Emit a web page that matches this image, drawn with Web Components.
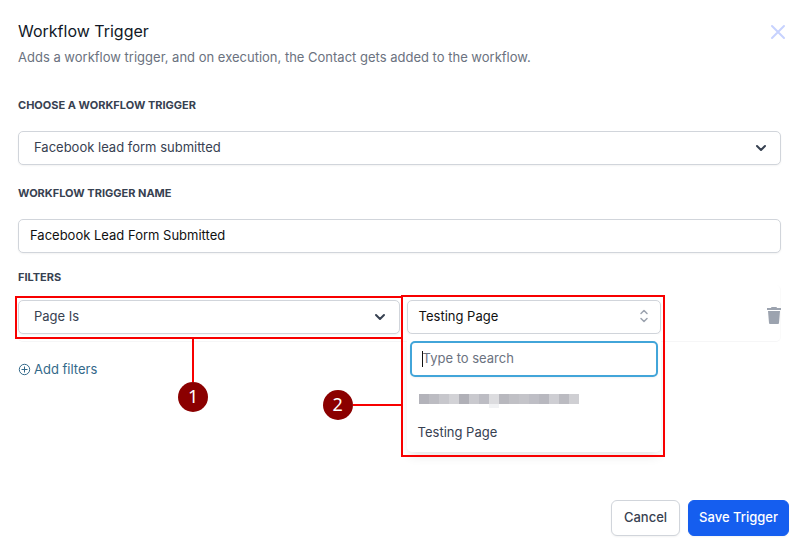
<!DOCTYPE html>
<html lang="en">
<head>
<meta charset="utf-8">
<meta name="viewport" content="width=device-width, initial-scale=1">
<title>Workflow Trigger</title>
<style>
  body {
    background: #ffffff;
    color: #374151;
    font-family: Inter, 'Liberation Sans', sans-serif;
    font-size: 13px;
    line-height: 20px;
    margin: 0;
  }
</style>
</head>
<body>

<wf-dialog heading="Workflow Trigger" description="Adds a workflow trigger, and on execution, the Contact gets added to the workflow.">
  <wf-select label="Choose a workflow trigger" value="Facebook lead form submitted"></wf-select>
  <wf-text-field label="Workflow trigger name" value="Facebook Lead Form Submitted"></wf-text-field>
  <wf-filters label="Filters">
    <wf-callout slot="field" number="1" side="bottom">
      <wf-select name="Filter" value="Page Is"></wf-select>
    </wf-callout>
    <wf-callout slot="value" number="2" side="left">
      <wf-combo value="Testing Page"></wf-combo>
    </wf-callout>
  </wf-filters>
  <wf-button slot="actions">Cancel</wf-button>
  <wf-button slot="actions" primary>Save Trigger</wf-button>
</wf-dialog>

<script>
class WFElement extends HTMLElement {
  constructor( html ) {
    super();

    const template = document.createElement( 'template' );
    template.innerHTML = html;

    this.attachShadow( {mode: 'open'} );
    this.shadowRoot.appendChild( template.content.cloneNode( true ) );
  }

  $( selector ) {
    return this.shadowRoot.querySelector( selector );
  }
}

// Shared by the labelled controls
const LABEL = /* css */ `
  .label {
    color: #374151;
    display: block;
    font-size: 11px;
    font-weight: 700;
    line-height: 16px;
    margin: 0 0 18px 0;
    text-transform: uppercase;
  }

  .label:empty {
    display: none;
  }
`;

const BOX = /* css */ `
  .box {
    appearance: none;
    background: #ffffff;
    border: solid 1px #d1d5db;
    border-radius: 5px;
    box-shadow: 0 1px 2px rgba( 0, 0, 0, 0.05 );
    box-sizing: border-box;
    color: inherit;
    font: inherit;
    height: 34px;
    margin: 0;
    min-width: 0;
    outline: none;
    width: 100%;
  }
`;

class WFDialog extends WFElement {
  constructor() {
    super( /* template */ `
      <style>
        :host {
          box-sizing: border-box;
          display: flex;
          flex-direction: column;
          min-height: 100vh;
          padding: 19px 10px 11px 10px;
        }

        header, main {
          padding: 0 8px;
        }

        header {
          align-items: flex-start;
          display: flex;
          justify-content: space-between;
        }

        h1 {
          color: #111827;
          font-size: 16px;
          font-weight: 400;
          line-height: 24px;
          margin: 0;
        }

        p {
          color: #6b7280;
          margin: 4px 0 0 0;
        }

        button {
          background: none;
          border: none;
          cursor: pointer;
          display: flex;
          padding: 5px 4px;
          margin: 0 -9px 0 0;
        }

        main {
          display: flex;
          flex-direction: column;
          gap: 20px;
          margin: 30px 0 0 0;
        }

        footer {
          display: flex;
          gap: 8px;
          justify-content: flex-end;
          margin: auto 0 0 0;
        }
      </style>
      <header>
        <div>
          <h1></h1>
          <p></p>
        </div>
        <button type="button" aria-label="Close">
          <svg width="16" height="16" viewBox="0 0 16 16" fill="none" stroke="#c7d2fe" stroke-width="2" stroke-linecap="round">
            <path d="M2 2L14 14M14 2L2 14" />
          </svg>
        </button>
      </header>
      <main><slot></slot></main>
      <footer><slot name="actions"></slot></footer>
    ` );
  }

  connectedCallback() {
    this.$( 'h1' ).textContent = this.getAttribute( 'heading' );
    this.$( 'p' ).textContent = this.getAttribute( 'description' );
  }
}

class WFSelect extends WFElement {
  constructor() {
    super( /* template */ `
      <style>
        ${LABEL}
        ${BOX}

        :host {
          display: block;
        }

        div {
          align-items: center;
          display: grid;
        }

        select, svg {
          grid-area: 1 / 1;
        }

        select.box {
          padding: 0 40px 2px 15px;
        }

        svg {
          justify-self: end;
          margin: 0 14px 0 0;
          pointer-events: none;
        }
      </style>
      <label class="label" for="control"></label>
      <div>
        <select class="box" id="control"><option></option></select>
        <svg width="12" height="12" viewBox="0 0 12 12" fill="none" stroke="#374151" stroke-width="2" stroke-linecap="round" stroke-linejoin="round">
          <path d="M2 4L6 8L10 4" />
        </svg>
      </div>
    ` );
  }

  connectedCallback() {
    this.$( 'label' ).textContent = this.getAttribute( 'label' ) || '';
    this.$( 'option' ).textContent = this.getAttribute( 'value' );

    if( this.hasAttribute( 'name' ) ) {
      this.$( 'select' ).setAttribute( 'aria-label', this.getAttribute( 'name' ) );
    }
  }
}

class WFTextField extends WFElement {
  constructor() {
    super( /* template */ `
      <style>
        ${LABEL}
        ${BOX}

        :host {
          display: block;
        }

        input.box {
          color: #111111;
          padding: 0 11px 2px 11px;
        }
      </style>
      <label class="label" for="control"></label>
      <input class="box" id="control" type="text">
    ` );
  }

  connectedCallback() {
    this.$( 'label' ).textContent = this.getAttribute( 'label' );
    this.$( 'input' ).value = this.getAttribute( 'value' );
  }
}

class WFCombo extends WFElement {
  constructor() {
    super( /* template */ `
      <style>
        ${BOX}

        :host {
          display: block;
          position: relative;
        }

        button.box {
          align-items: center;
          color: #111111;
          cursor: pointer;
          display: flex;
          justify-content: space-between;
          padding: 0 11px 2px 11px;
        }

        /* Open menu, lies over the rest of the dialog */
        .menu {
          background: #ffffff;
          border-radius: 5px;
          box-shadow: 0 6px 12px -3px rgba( 0, 0, 0, 0.12 );
          box-sizing: border-box;
          left: 0;
          padding: 7px 3px 4px 3px;
          position: absolute;
          right: 0;
          top: 100%;
        }

        /* The caret sits just ahead of the placeholder */
        input.box {
          background: linear-gradient( #111111, #111111 ) 10px center / 1px 16px no-repeat #ffffff;
          border: solid 2px #42a5d9;
          caret-color: transparent;
          height: 36px;
          padding: 0 10px 2px 11px;
        }

        input::placeholder {
          color: #6b7280;
          opacity: 1;
        }

        ul {
          list-style: none;
          margin: 5px 0 0 0;
          padding: 0;
        }

        li {
          align-items: center;
          display: flex;
          height: 33px;
          padding: 0 8px;
        }
      </style>
      <button class="box" type="button" aria-haspopup="listbox" aria-expanded="true">
        <span></span>
        <svg width="10" height="14" viewBox="0 0 10 14" fill="none" stroke="#9ca3af" stroke-width="1.5" stroke-linecap="round" stroke-linejoin="round">
          <path d="M2 4.500L5 1.500L8 4.500M2 9.500L5 12.500L8 9.500" />
        </svg>
      </button>
      <div class="menu">
        <input class="box" type="text" placeholder="Type to search" aria-label="Search pages">
        <ul role="listbox">
          <li role="option" aria-selected="false">
            <svg width="161" height="18" viewBox="0 0 161 18" shape-rendering="crispEdges" aria-hidden="true"></svg>
          </li>
          <li role="option" aria-selected="true"></li>
        </ul>
      </div>
    ` );

    // Redacted page name, one block per colour
    const blocks = ['#b3b3ba', '#bcbcc2', '#c7c7cc', '#d2d2d6', '#b0b0b7', '#c9c9ce', '#bcbcc3', '#dcdcdf',
      '#b8b8be', '#c0c0c5', '#c4c4c9', '#bebec5', '#b8b8bf', '#ceced3', '#bbbbc1', '#cfcfd3'];

    this.$( 'li svg' ).innerHTML = blocks.map( ( fill, i ) =>
      `<rect x="${1 + i * 10}" y="4" width="10" height="10" fill="${fill}" />`
    ).join( '' ) + '<rect x="71" y="14" width="10" height="7" fill="#f1f2f4" />';
  }

  connectedCallback() {
    this.$( 'span' ).textContent = this.getAttribute( 'value' );
    this.$( 'li:last-child' ).textContent = this.getAttribute( 'value' );
  }
}

class WFFilters extends WFElement {
  constructor() {
    super( /* template */ `
      <style>
        :host {
          display: block;
          margin: -4px 0 0 0;
        }

        h2 {
          font-size: 11px;
          font-weight: 700;
          line-height: 16px;
          margin: 0;
          text-transform: uppercase;
        }

        section {
          border-bottom: solid 1px #f6f6f7;
          border-right: solid 1px #fafafa;
          border-radius: 5px;
          display: grid;
          gap: 7px;
          grid-template-columns: 3fr 2fr 112px;
          padding: 15px 0 7px 0;
        }

        button {
          background: none;
          border: none;
          color: inherit;
          cursor: pointer;
          font: inherit;
          padding: 0;
        }

        .remove {
          align-self: center;
          display: flex;
          justify-self: end;
          margin: 0 -1px 4px 0;
        }

        .add {
          align-items: center;
          color: #33698a;
          display: flex;
          gap: 3px;
          margin: 17px 0 0 0;
        }
      </style>
      <h2></h2>
      <section>
        <slot name="field"></slot>
        <slot name="value"></slot>
        <button class="remove" type="button" aria-label="Remove filter">
          <svg width="14" height="17" viewBox="0 0 14 17" fill="#9ca3af">
            <path d="M4 1Q4 0 5 0H9Q10 0 10 1H14V3H0V1Z" />
            <path d="M1 4H13L12 16Q12 17 11 17H3Q2 17 2 16Z" />
          </svg>
        </button>
      </section>
      <button class="add" type="button">
        <svg width="13" height="13" viewBox="0 0 13 13" fill="none" stroke="currentColor">
          <circle cx="6.5" cy="6.5" r="5.2" />
          <path d="M6.5 3.5V9.5M3.5 6.5H9.5" />
        </svg>
        Add filters
      </button>
    ` );
  }

  connectedCallback() {
    this.$( 'h2' ).textContent = this.getAttribute( 'label' );
  }
}

// Numbered red frame around whatever is slotted
class WFCallout extends WFElement {
  constructor() {
    super( /* template */ `
      <style>
        :host {
          display: block;
          min-width: 0;
          position: relative;
        }

        .frame {
          border: solid 2px #f80000;
          bottom: -5px;
          left: -3px;
          pointer-events: none;
          position: absolute;
          right: -3px;
          top: -4px;
        }

        .pin {
          align-items: center;
          display: flex;
          position: absolute;
        }

        .line {
          background: #f80000;
        }

        .badge {
          background: #8b0000;
          border-radius: 50%;
          color: #ffffff;
          font-family: 'Noto Sans', sans-serif;
          font-size: 18px;
          height: 30px;
          line-height: 28px;
          text-align: center;
          width: 30px;
        }

        :host( [side=bottom] ) .pin {
          flex-direction: column;
          left: 42%;
          top: 100%;
        }

        :host( [side=bottom] ) .line {
          height: 45px;
          width: 2px;
        }

        /* Left callouts also take in the open menu below */
        :host( [side=left] ) .frame {
          bottom: -123px;
          left: -6px;
          right: -4px;
          top: -5px;
        }

        :host( [side=left] ) .pin {
          bottom: 35px;
          flex-direction: row-reverse;
          right: 100%;
        }

        :host( [side=left] ) .line {
          height: 2px;
          width: 50px;
        }
      </style>
      <slot></slot>
      <div class="frame">
        <div class="pin">
          <span class="line"></span>
          <span class="badge"></span>
        </div>
      </div>
    ` );
  }

  connectedCallback() {
    this.$( '.badge' ).textContent = this.getAttribute( 'number' );
  }
}

class WFButton extends WFElement {
  constructor() {
    super( /* template */ `
      <style>
        :host {
          display: inline-flex;
        }

        button {
          background: #ffffff;
          border: solid 1px #d1d5db;
          border-radius: 6px;
          box-shadow: 0 1px 2px rgba( 0, 0, 0, 0.05 );
          color: #374151;
          cursor: pointer;
          font: inherit;
          font-weight: 500;
          height: 36px;
          padding: 0 12px 2px 12px;
        }

        :host( [primary] ) button {
          background: #155eef;
          border-color: #155eef;
          color: #ffffff;
          padding: 0 10px 2px 10px;
        }
      </style>
      <button type="button"><slot></slot></button>
    ` );
  }
}

window.customElements.define( 'wf-dialog', WFDialog );
window.customElements.define( 'wf-select', WFSelect );
window.customElements.define( 'wf-text-field', WFTextField );
window.customElements.define( 'wf-combo', WFCombo );
window.customElements.define( 'wf-filters', WFFilters );
window.customElements.define( 'wf-callout', WFCallout );
window.customElements.define( 'wf-button', WFButton );
</script>
</body>
</html>
